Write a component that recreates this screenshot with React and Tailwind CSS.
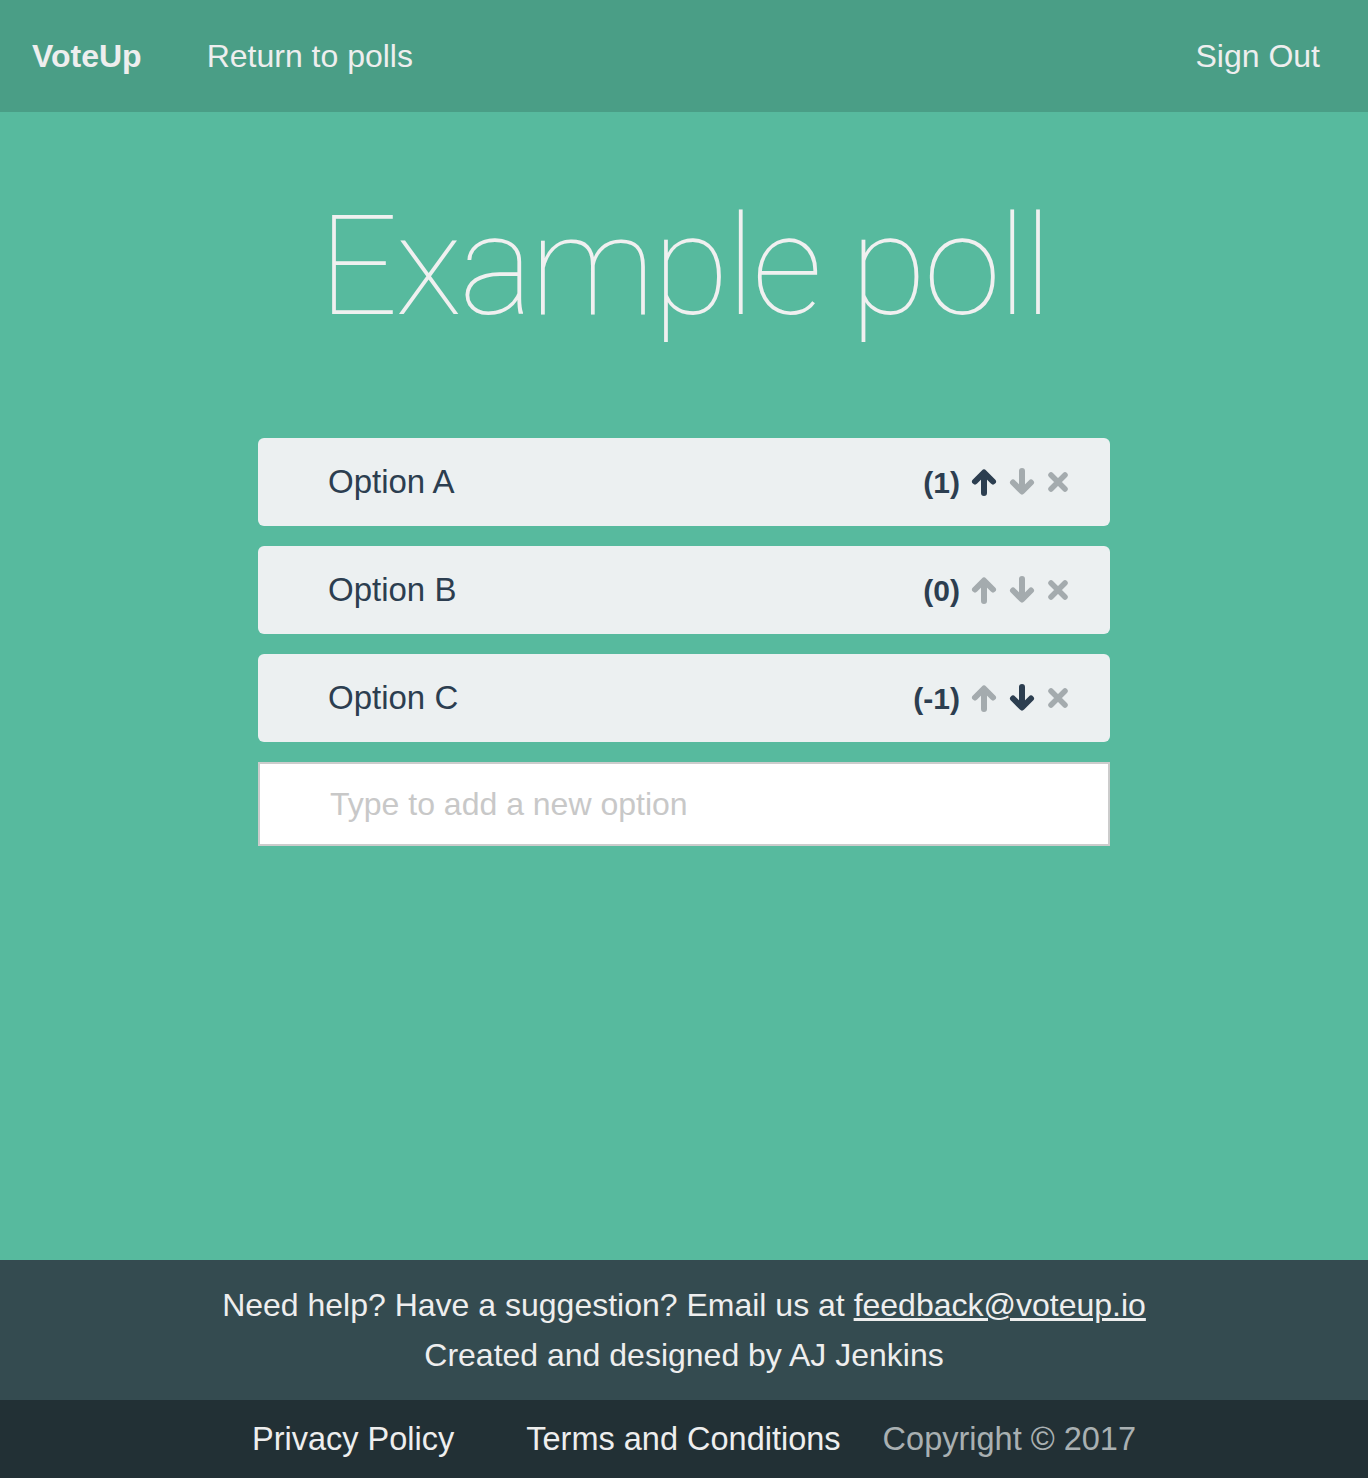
const options = [
  { name: "Option A", votes: "(1)", up: true, down: false },
  { name: "Option B", votes: "(0)", up: false, down: false },
  { name: "Option C", votes: "(-1)", up: false, down: true },
];

function Arrow({ dir, active }) {
  const d = dir === "up" ? "M14 25 V5 M5 13.5 L14 4.5 L23 13.5" : "M14 3 V23 M5 14.5 L14 23.5 L23 14.5";
  return (
    <svg viewBox="0 0 28 28" className={"mr-[10px] h-[28px] w-[28px] " + (active ? "text-[#2c3e50]" : "text-[#a4abae]")}>
      <path d={d} fill="none" stroke="currentColor" strokeWidth="6" strokeLinecap="round" strokeLinejoin="round" />
    </svg>
  );
}

function OptionRow({ option }) {
  return (
    <div className="flex h-[88px] items-center justify-between rounded-md bg-[#ecf0f1] pl-[70px] pr-[40px] text-[#2c3e50]">
      <span className="text-[33px]">{option.name}</span>
      <div className="flex items-center">
        <span className="mr-[10px] text-[30px] font-bold">{option.votes}</span>
        <Arrow dir="up" active={option.up} />
        <Arrow dir="down" active={option.down} />
        <svg viewBox="0 0 24 24" className="h-[24px] w-[24px] text-[#a4abae]">
          <path d="M5 5 L19 19 M19 5 L5 19" fill="none" stroke="currentColor" strokeWidth="5.5" strokeLinecap="round" />
        </svg>
      </div>
    </div>
  );
}

export default function App() {
  return (
    <div className="flex min-h-[1478px] flex-col bg-[#57ba9e] font-['Liberation_Sans',Arial,sans-serif] text-[#eeeeee]">
      <header className="flex h-[112px] items-center bg-[#4a9e86] pl-[32px] pr-[48px] text-[32px]">
        <span className="font-bold">VoteUp</span>
        <a className="ml-[65px]">Return to polls</a>
        <a className="ml-auto">Sign Out</a>
      </header>

      <main className="flex h-[1148px] flex-col items-center">
        <h1 className="mt-[74px] h-[252px] font-['Roboto',sans-serif] text-[140px] font-thin leading-[160px] tracking-[-3px] text-[#f0f0f0]">
          Example poll
        </h1>
        <div className="flex w-[852px] flex-col gap-[20px]">
          {options.map((o) => (
            <OptionRow key={o.name} option={o} />
          ))}
          <input
            className="h-[84px] border-2 border-[#cccccc] bg-white pl-[70px] text-[32px] text-[#2c3e50] outline-none placeholder:text-[#c8c8c8]"
            placeholder="Type to add a new option"
          />
        </div>
      </main>

      <footer className="bg-[#344b50] py-[20px] text-center text-[32px] leading-[50px]">
        <p>
          Need help? Have a suggestion? Email us at{" "}
          <a className="underline">feedback@voteup.io</a>
        </p>
        <p>Created and designed by AJ Jenkins</p>
      </footer>
      <div className="flex h-[78px] items-center justify-center bg-[#223035] pl-[20px] text-[32.5px]">
        <a className="mr-[72px]">Privacy Policy</a>
        <a className="mr-[42px]">Terms and Conditions</a>
        <span className="text-[#a9b0b2]">Copyright © 2017</span>
      </div>
    </div>
  );
}
